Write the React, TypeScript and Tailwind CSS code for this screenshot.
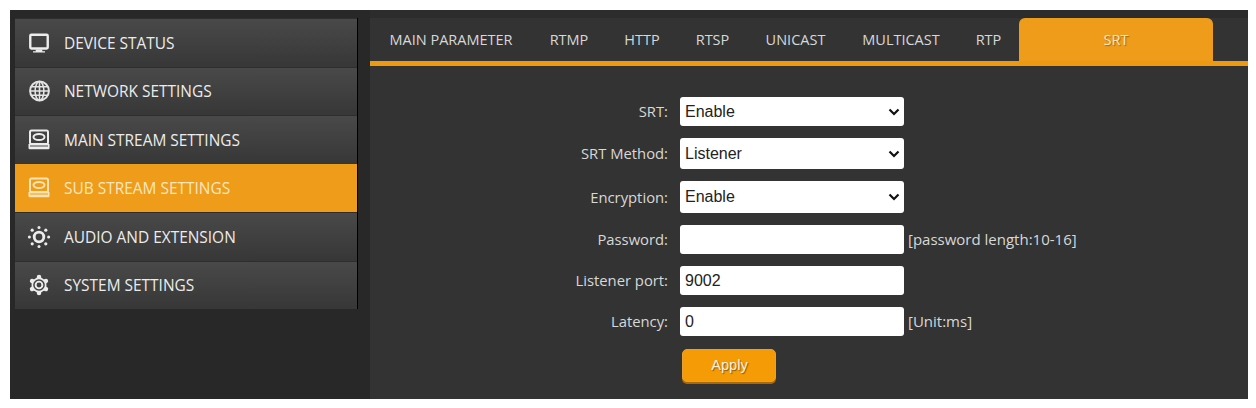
import React from "react";

const Monitor = () => (
  <svg width="24" height="24" viewBox="0 0 22 22" fill="none">
    <rect x="3" y="3.500" width="16" height="12.500" rx="1" stroke="#ececec" strokeWidth="2.200" />
    <path d="M8 17h6v1.500h2.500v1.200h-11v-1.200H8z" fill="#ececec" />
  </svg>
);
const Globe = () => (
  <svg width="23" height="23" viewBox="0 0 22 22" fill="none" stroke="#e4e4e4">
    <circle cx="11" cy="10.500" r="9" strokeWidth="1.900" />
    <ellipse cx="11" cy="10.500" rx="4.200" ry="9" strokeWidth="1.500" />
    <path d="M11 1.500v18M2 10.500h18M3.200 6.500h15.600M3.200 14.500h15.600" strokeWidth="1.500" />
  </svg>
);
const Disk = ({ c = "#ececec", gap = "#4a4a4a" }: { c?: string; gap?: string }) => (
  <svg width="24" height="22" viewBox="0 0 24 22" fill="none">
    <rect x="3" y="1.500" width="18" height="13.500" rx="1.500" stroke={c} strokeWidth="2" />
    <ellipse cx="12" cy="8" rx="5.500" ry="3" stroke={c} strokeWidth="2" />
    <path d="M1.500 15h21v4a1.200 1.200 0 0 1-1.200 1.200H2.700A1.200 1.200 0 0 1 1.500 19z" fill={c} />
    <path d="M3 17h18" stroke={gap} strokeWidth="1" />
  </svg>
);
const Audio = () => (
  <svg width="24" height="24" viewBox="0 0 24 24" fill="none">
    <circle cx="12" cy="12" r="4.800" stroke="#ececec" strokeWidth="2.800" />
    <g fill="#ececec">
      <circle cx="12" cy="2.400" r="1.500" />
      <circle cx="12" cy="21.600" r="1.500" />
      <circle cx="2.400" cy="12" r="1.500" />
      <circle cx="21.600" cy="12" r="1.500" />
      <circle cx="5.200" cy="5.200" r="1.600" />
      <circle cx="18.800" cy="5.200" r="1.600" />
      <circle cx="5.200" cy="18.800" r="1.600" />
      <circle cx="18.800" cy="18.800" r="1.600" />
    </g>
  </svg>
);
const Gear = () => (
  <svg width="22" height="22" viewBox="0 0 22 22" fill="none">
    <circle cx="11" cy="11" r="7.500" fill="#ececec" />
    <g stroke="#ececec" strokeWidth="4.500" strokeLinecap="round">
      <path d="M11 3v16" />
      <path d="M4.100 7l13.800 8" />
      <path d="M4.100 15l13.800-8" />
    </g>
    <circle cx="11" cy="11" r="5.800" fill="#404040" />
    <circle cx="11" cy="11" r="3.400" stroke="#ececec" strokeWidth="1.900" />
  </svg>
);

const menu: { label: string; icon: React.ReactNode; active?: boolean }[] = [
  { label: "DEVICE STATUS", icon: <Monitor /> },
  { label: "NETWORK SETTINGS", icon: <Globe /> },
  { label: "MAIN STREAM SETTINGS", icon: <Disk /> },
  { label: "SUB STREAM SETTINGS", icon: <Disk c="#fbe3b4" gap="#ee9c1a" />, active: true },
  { label: "AUDIO AND EXTENSION", icon: <Audio /> },
  { label: "SYSTEM SETTINGS", icon: <Gear /> },
];

const tabs: { label: string; w: string }[] = [
  { label: "MAIN PARAMETER", w: "w-[162px]" },
  { label: "RTMP", w: "w-[74px]" },
  { label: "HTTP", w: "w-[72px]" },
  { label: "RTSP", w: "w-[69px]" },
  { label: "UNICAST", w: "w-[97px]" },
  { label: "MULTICAST", w: "w-[114px]" },
  { label: "RTP", w: "w-[61px]" },
];

const Row = ({ label, children, hint, h }: { label: string; children: React.ReactNode; hint?: string; h: string }) => (
  <div className={`flex items-center ${h}`}>
    <label className="w-[310px] pr-[12px] text-right text-[14.8px] font-medium text-[#d8d8d8]">{label}</label>
    {children}
    {hint && <span className="ml-[4px] text-[15px] font-medium text-[#d8d8d8]">{hint}</span>}
  </div>
);

const Select = ({ value, options }: { value: string; options: string[] }) => (
  <div className="relative h-full w-[224px]">
    <select
      defaultValue={value}
      className="h-full w-full appearance-none rounded-[3px] bg-white pl-[5px] font-['Liberation_Sans',sans-serif] text-[16px] text-[#222] outline-none"
    >
      {options.map((o) => (
        <option key={o}>{o}</option>
      ))}
    </select>
    <svg
      className="pointer-events-none absolute right-[4px] top-1/2 -translate-y-1/2"
      width="12"
      height="8"
      viewBox="0 0 12 8"
      fill="none"
    >
      <path d="M1.500 1.500 6 6l4.500-4.500" stroke="#111" strokeWidth="2.200" />
    </svg>
  </div>
);

const input =
  "w-[224px] h-full rounded-[3px] bg-white pl-[5px] text-[16px] text-[#222] outline-none font-['Liberation_Sans',sans-serif]";

export default function App() {
  return (
    <div className="h-[408px] w-[1256px] overflow-hidden bg-white pl-[10px] pr-[8px] pt-[10px] pb-[9px] font-['Open_Sans',sans-serif]">
      <div className="flex h-full bg-[#282828]">
        <div className="w-[360px] shrink-0 pl-[5px] pt-[8px]">
          <div className="w-[343px] border-r border-r-black">
            {menu.map((m) => (
              <div
                key={m.label}
                className={`flex h-[48.5px] items-center border-t ${
                  m.active
                    ? "border-t-[#ee9c1a] bg-[#ee9c1a] text-[#fbe6bd]"
                    : "border-t-[#2e2e2e] bg-gradient-to-b from-[#494949] to-[#373737] text-[#ececec]"
                }`}
              >
                <span className="flex w-[49px] shrink-0 justify-center pr-[1px]">{m.icon}</span>
                <span className="pt-[1px] text-[15.45px] font-medium">{m.label}</span>
              </div>
            ))}
          </div>
        </div>
        <div className="flex-1 bg-[#333]">
          <div className="h-[8px] bg-[#2c2c2c]" />
          <div className="flex h-[43px] items-stretch">
            {tabs.map((t) => (
              <div key={t.label} className={`flex items-center justify-center text-[14.5px] font-medium text-[#d8d8d8] ${t.w}`}>
                {t.label}
              </div>
            ))}
            <div className="flex w-[194px] items-center justify-center rounded-t-[6px] bg-[#ee9c1a] text-[14.5px] font-medium text-[#fbe6bd] [text-shadow:1px_1px_1px_#9a6a20]">
              SRT
            </div>
          </div>
          <div className="h-[5px] bg-[#ee9a10]" />
          <div className="flex flex-col pt-[31px]">
            <div className="flex flex-col gap-[12px]">
              <Row label="SRT:" h="h-[29px]">
                <Select value="Enable" options={["Enable", "Disable"]} />
              </Row>
              <Row label="SRT Method:" h="h-[31px]">
                <Select value="Listener" options={["Listener", "Caller"]} />
              </Row>
              <Row label="Encryption:" h="h-[32px]">
                <Select value="Enable" options={["Enable", "Disable"]} />
              </Row>
              <Row label="Password:" h="h-[29px]" hint="[password length:10-16]">
                <input className={input} type="text" defaultValue="" />
              </Row>
              <Row label="Listener port:" h="h-[29px]">
                <input className={input} type="text" defaultValue="9002" />
              </Row>
              <Row label="Latency:" h="h-[29px]" hint="[Unit:ms]">
                <input className={input} type="text" defaultValue="0" />
              </Row>
            </div>
            <div className="pl-[312px] pt-[13px]">
              <button className="h-[33px] w-[94px] rounded-[5px] border border-[#e8a030] bg-[#f59b05] pl-[1px] font-['Liberation_Sans',sans-serif] text-[14.5px] text-[#fff2dc] shadow-[0_2px_0_#a86a08] [text-shadow:1px_1px_1px_#8a5a10]">
                Apply
              </button>
            </div>
          </div>
        </div>
      </div>
    </div>
  );
}
